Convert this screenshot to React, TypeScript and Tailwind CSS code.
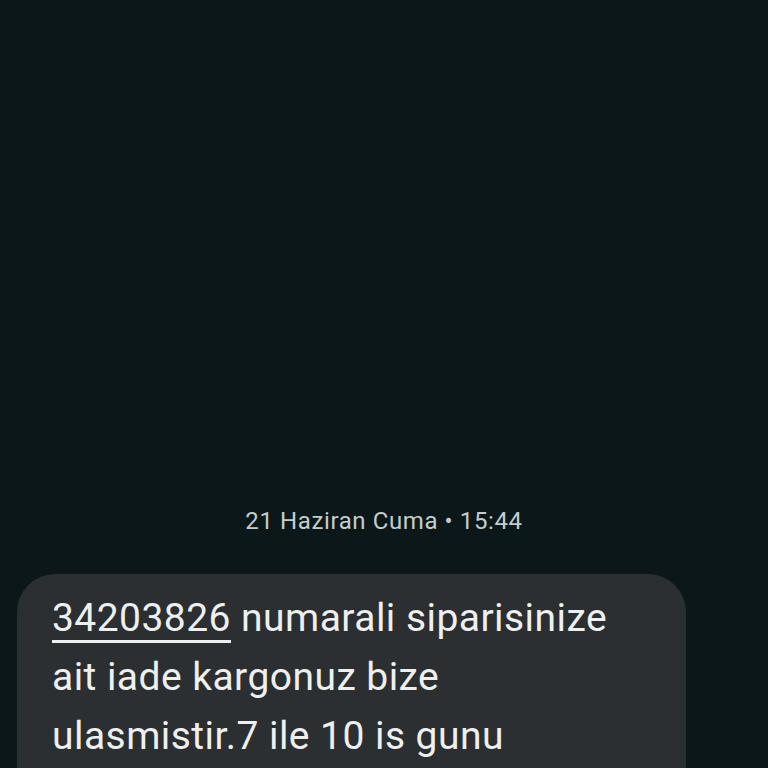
export default function App() {
  return (
    <div
      className="flex h-[768px] w-[768px] flex-col justify-end overflow-hidden bg-[#0b1718]"
      style={{ fontFamily: "Roboto, 'Noto Sans', sans-serif" }}
    >
      <p className="mb-[39px] text-center text-[24px] leading-[28px] tracking-[0.6px] text-[#c3cdcd]">
        21 Haziran Cuma • 15:44
      </p>
      <div className="ml-[17px] w-[669px] rounded-t-[38px] bg-[#2c2f31] px-[35px] pb-[2px] pt-[15px]">
        <p className="text-[39px] leading-[59px] tracking-[0.45px] text-[#eef0f0]">
          <span className="underline decoration-[3px] underline-offset-[9px]">34203826</span>{" "}
          numarali siparisinize
          <br />
          ait iade kargonuz bize
          <br />
          ulasmistir.7 ile 10 is gunu
        </p>
      </div>
    </div>
  );
}
